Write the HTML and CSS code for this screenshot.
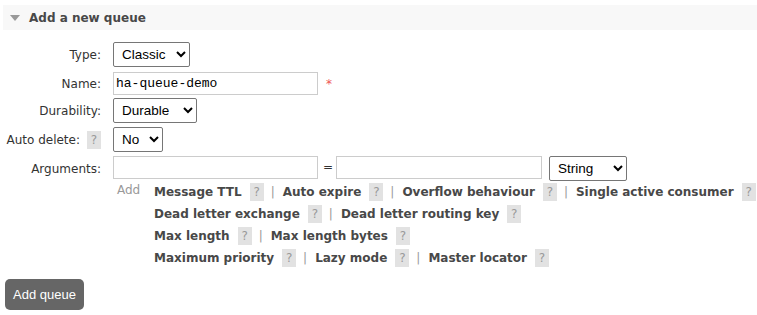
FILE: index.html
```html
<!DOCTYPE html>
<html>
<head>
<meta charset="utf-8">
<link rel="stylesheet" href="styles.css">
</head>
<body>
<div class="section">
  <h2 class="section-head"><span class="tri"></span>Add a new queue</h2>
  <form class="form">
    <div class="row">
      <div class="label">Type:</div>
      <div class="ctl"><select class="sel sel-type"><option>Classic</option></select></div>
    </div>
    <div class="row row-name">
      <div class="label">Name:</div>
      <div class="ctl"><input class="inp" type="text" value="ha-queue-demo"><span class="req">*</span></div>
    </div>
    <div class="row">
      <div class="label">Durability:</div>
      <div class="ctl"><select class="sel sel-dur"><option>Durable</option></select></div>
    </div>
    <div class="row">
      <div class="label label-help">Auto delete: <span class="help">?</span></div>
      <div class="ctl"><select class="sel sel-no"><option>No</option></select></div>
    </div>
    <div class="row">
      <div class="label">Arguments:</div>
      <div class="ctl ctl-top"><input class="inp" type="text"><span class="eq">=</span><input class="inp inp-val" type="text"><select class="sel sel-str"><option>String</option></select></div>
    </div>
    <div class="args">
      <span class="add">Add</span>
      <div class="links">
        <div class="lrow"><b>Message TTL</b><span class="help">?</span><span class="sep">|</span><b>Auto expire</b><span class="help">?</span><span class="sep">|</span><b>Overflow behaviour</b><span class="help">?</span><span class="sep">|</span><b>Single active consumer</b><span class="help">?</span></div>
        <div class="lrow"><b>Dead letter exchange</b><span class="help">?</span><span class="sep">|</span><b>Dead letter routing key</b><span class="help">?</span></div>
        <div class="lrow"><b>Max length</b><span class="help">?</span><span class="sep">|</span><b>Max length bytes</b><span class="help">?</span></div>
        <div class="lrow"><b>Maximum priority</b><span class="help">?</span><span class="sep">|</span><b>Lazy mode</b><span class="help">?</span><span class="sep">|</span><b>Master locator</b><span class="help">?</span></div>
      </div>
    </div>
    <button class="btn" type="button">Add queue</button>
  </form>
</div>
</body>
</html>
```
FILE: styles.css
```css
html, body { margin: 0; padding: 0; background: #fff; }
body { font-family: "DejaVu Sans", Verdana, sans-serif; font-size: 12px; color: #484848; }
.section { padding: 5px 0 0 3px; }
.section-head {
  margin: 0; height: 25px; background: #f8f8f8;
  display: flex; align-items: center;
  font-size: 12px; font-weight: bold; color: #484848;
  padding-left: 7px;
}
.tri {
  width: 0; height: 0; margin-right: 9px; margin-top: 1px;
  border-left: 5px solid transparent; border-right: 5px solid transparent;
  border-top: 6px solid #999;
}
.form { display: flex; flex-direction: column; padding-top: 12px; }
.row { display: grid; grid-template-columns: 98px 1fr; column-gap: 12px; align-items: center; margin-bottom: 4px; }
.row-name { margin-top: 1px; margin-bottom: 3px; }
.label { text-align: right; color: #333; }
.label-help { display: flex; justify-content: flex-end; align-items: center; gap: 7px; white-space: nowrap; }
.ctl { display: flex; align-items: center; }
.ctl-top { align-items: flex-start; }
.sel {
  font-family: "Liberation Sans", Arial, sans-serif; font-size: 13.5px; color: #000;
  height: 25px; border: 1px solid #767676; border-radius: 2px; background: #fff;
  padding: 0 2px 0 4px;
}
.sel-type { width: 77px; }
.sel-dur { width: 84px; }
.sel-no { width: 50px; }
.sel-str { width: 78px; margin-left: 7px; }
.inp {
  font-family: "Liberation Mono", "Courier New", monospace; font-size: 13px; color: #000;
  width: 205px; height: 23px; box-sizing: border-box; border: 1px solid #ccc; padding: 1px 2px;
}
.inp-val { width: 206px; }
.req { color: #e55; margin-left: 8px; font-size: 12px; }
.eq { margin: 0 3px 0 5px; color: #333; line-height: 23px; }
.help {
  display: inline-flex; align-items: center; justify-content: center;
  width: 14px; height: 18px; background: #e2e2e2; color: #999; font-weight: normal; font-size: 12px;
}
.args { display: flex; padding-left: 114px; margin-top: -4px; }
.add { color: #999; width: 37px; padding-top: 2px; }
.links { display: flex; flex-direction: column; }
.lrow { display: flex; align-items: center; height: 22px; white-space: nowrap; }
.lrow b { color: #484848; }
.lrow .help { margin-left: 8px; }
.sep { color: #999; margin: 0 8px 0 7px; }
.btn {
  align-self: flex-start; margin: 10px 0 0 2px;
  width: 79px; height: 31px; border: 0; border-radius: 5px;
  background: #666; color: #fff;
  font-family: "Liberation Sans", Arial, sans-serif; font-size: 13px;
}
```
